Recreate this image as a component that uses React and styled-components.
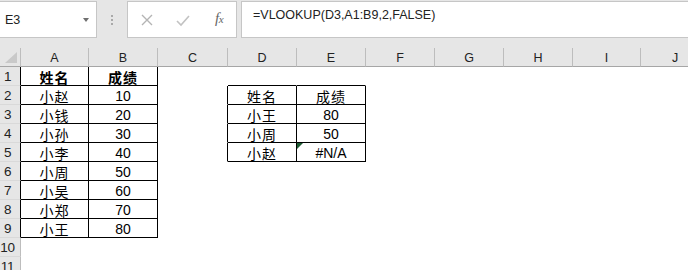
import React from "react";
import styled, { createGlobalStyle } from "styled-components";

const Global = createGlobalStyle`
  html, body { margin: 0; padding: 0; background: #ffffff; overflow: hidden; }
  body { width: 688px; height: 270px; }
`;

const Page = styled.div`
  width: 688px;
  height: 270px;
  overflow: hidden;
  font-family: "Liberation Sans", Arial, sans-serif;
  background: #ffffff;
`;

const TopBar = styled.div`
  height: 48px;
  background: #e6e6e6;
  display: flex;
  align-items: flex-start;
  padding-top: 1px;
  box-sizing: border-box;
`;

const NameBox = styled.div`
  width: 98px;
  height: 37px;
  margin-left: -1px;
  box-sizing: border-box;
  background: #ffffff;
  border: 1px solid #c6c6c6;
  display: flex;
  align-items: center;
  justify-content: space-between;
  padding: 0 7px 0 5px;
  font-size: 12.5px;
  color: #222;
`;

const DropArrow = styled.span`
  width: 0;
  height: 0;
  border-left: 3.5px solid transparent;
  border-right: 3.5px solid transparent;
  border-top: 4px solid #6f6f6f;
  margin-top: 1px;
`;

const Grip = styled.div`
  width: 30px;
  height: 37px;
  display: flex;
  flex-direction: column;
  align-items: center;
  justify-content: center;
  gap: 2px;
  padding-top: 1px;
  box-sizing: border-box;
`;

const Dot = styled.span`
  width: 2px;
  height: 2px;
  background: #a9a9a9;
`;

const FuncBox = styled.div`
  width: 110px;
  height: 37px;
  box-sizing: border-box;
  background: #ffffff;
  border: 1px solid #c6c6c6;
  display: grid;
  grid-template-columns: repeat(3, 36px);
  align-items: center;
  justify-items: center;
  padding-left: 1px;
`;

const Fx = styled.span`
  font-family: "Liberation Serif", "Times New Roman", serif;
  font-style: italic;
  color: #666;
  font-size: 15px;
  letter-spacing: -0.5px;
  margin-top: -2px;
  & > small { font-size: 11px; }
`;

const FormulaBox = styled.div`
  flex: 1;
  height: 37px;
  margin-left: 4px;
  margin-right: -2px;
  box-sizing: border-box;
  background: #ffffff;
  border: 1px solid #c6c6c6;
  padding: 6px 0 0 11px;
  font-size: 12.5px;
  color: #222;
  white-space: nowrap;
`;

const widths = [68, 69, 70, 69, 69, 69, 69, 69, 68, 69];
const letters = ["A", "B", "C", "D", "E", "F", "G", "H", "I", "J"];

const Sheet = styled.div`
  display: grid;
  grid-template-columns: 21px ${widths.map((w) => w + "px").join(" ")};
  grid-template-rows: repeat(12, 19px);
  width: 710px;
`;

const Corner = styled.div`
  background: #e6e6e6;
  border-bottom: 1px solid #a6a6a6;
  border-right: 1px solid #bdbdbd;
  box-sizing: border-box;
  display: flex;
  align-items: flex-end;
  justify-content: flex-end;
  padding: 0 3px 3px 0;
`;

const ColHead = styled.div`
  background: #e6e6e6;
  border-bottom: 1px solid #a6a6a6;
  border-right: 1px solid #bdbdbd;
  box-sizing: border-box;
  display: flex;
  align-items: flex-end;
  justify-content: center;
  padding-bottom: 1px;
  font-size: 12.5px;
  color: #222;
`;

const RowHead = styled.div`
  background: #e6e6e6;
  border-bottom: 1px solid #d9d9d9;
  border-right: 1px solid ${(p) => (p.$dark ? "#000" : "#bdbdbd")};
  box-sizing: border-box;
  display: flex;
  align-items: center;
  justify-content: center;
  padding-right: 5px;
  font-size: 13.5px;
  letter-spacing: -0.3px;
  color: #222;
  overflow: hidden;
`;

const Cell = styled.div`
  position: relative;
  box-sizing: border-box;
  border-right: 1px solid ${(p) => (p.$r ? "#000" : "transparent")};
  border-bottom: 1px solid ${(p) => (p.$b ? "#000" : "transparent")};
  display: flex;
  align-items: center;
  justify-content: center;
  padding-top: 1px;
  color: #000;
  font-family: ${(p) =>
    p.$cjk
      ? '"Noto Sans CJK SC", "Noto Sans", sans-serif'
      : '"Liberation Sans", Arial, sans-serif'};
  font-size: ${(p) => (p.$cjk ? "14px" : "14px")};
  letter-spacing: ${(p) => (p.$cjk ? "1px" : "0")};
  font-weight: ${(p) => (p.$bold ? 700 : 400)};
  line-height: 18px;
  white-space: nowrap;
`;

const ErrorFlag = styled.span`
  position: absolute;
  left: 0;
  top: 0;
  width: 0;
  height: 0;
  border-top: 6px solid #1d5b32;
  border-right: 6px solid transparent;
`;

const data = {};
const t1 = [
  ["小赵", "10"],
  ["小钱", "20"],
  ["小孙", "30"],
  ["小李", "40"],
  ["小周", "50"],
  ["小吴", "60"],
  ["小郑", "70"],
  ["小王", "80"],
];
data["1,0"] = { text: "姓名", cjk: true, bold: true };
data["1,1"] = { text: "成绩", cjk: true, bold: true };
t1.forEach(([n, s], i) => {
  data[`${i + 2},0`] = { text: n, cjk: true };
  data[`${i + 2},1`] = { text: s };
});
data["2,3"] = { text: "姓名", cjk: true };
data["2,4"] = { text: "成绩", cjk: true };
data["3,3"] = { text: "小王", cjk: true };
data["3,4"] = { text: "80" };
data["4,3"] = { text: "小周", cjk: true };
data["4,4"] = { text: "50" };
data["5,3"] = { text: "小赵", cjk: true };
data["5,4"] = { text: "#N/A", flag: true };

const inTable = (r, c) =>
  (r >= 1 && r <= 9 && c >= 0 && c <= 1) ||
  (r >= 2 && r <= 5 && c >= 3 && c <= 4);

function XIcon() {
  return (
    <svg width="14" height="14" viewBox="0 0 14 14">
      <path d="M2 2 L12 12 M12 2 L2 12" stroke="#b4b4b4" strokeWidth="1.4" fill="none" />
    </svg>
  );
}

function CheckIcon() {
  return (
    <svg width="16" height="14" viewBox="0 0 16 14">
      <path d="M2 8 L6 12 L14 3" stroke="#c2c2c2" strokeWidth="1.6" fill="none" />
    </svg>
  );
}

function SelectAll() {
  return (
    <svg width="12" height="11" viewBox="0 0 12 11">
      <path d="M12 0 L12 11 L0 11 Z" fill="#c9c9c9" />
    </svg>
  );
}

export default function App() {
  const rows = [];
  for (let r = 1; r <= 11; r++) {
    rows.push(
      <RowHead key={`rh${r}`} $dark={inTable(r, 0)}>
        {r}
      </RowHead>
    );
    for (let c = 0; c < 10; c++) {
      const d = data[`${r},${c}`];
      rows.push(
        <Cell
          key={`${r},${c}`}
          $r={inTable(r, c) || inTable(r, c + 1)}
          $b={inTable(r, c) || inTable(r + 1, c)}
          $cjk={d && d.cjk}
          $bold={d && d.bold}
        >
          {d && d.flag && <ErrorFlag />}
          {d ? d.text : null}
        </Cell>
      );
    }
  }
  return (
    <Page>
      <Global />
      <TopBar>
        <NameBox>
          <span>E3</span>
          <DropArrow />
        </NameBox>
        <Grip>
          <Dot />
          <Dot />
          <Dot />
        </Grip>
        <FuncBox>
          <XIcon />
          <CheckIcon />
          <Fx>
            f<small>x</small>
          </Fx>
        </FuncBox>
        <FormulaBox>=VLOOKUP(D3,A1:B9,2,FALSE)</FormulaBox>
      </TopBar>
      <Sheet>
        <Corner>
          <SelectAll />
        </Corner>
        {letters.map((l) => (
          <ColHead key={l}>{l}</ColHead>
        ))}
        {rows}
      </Sheet>
    </Page>
  );
}
